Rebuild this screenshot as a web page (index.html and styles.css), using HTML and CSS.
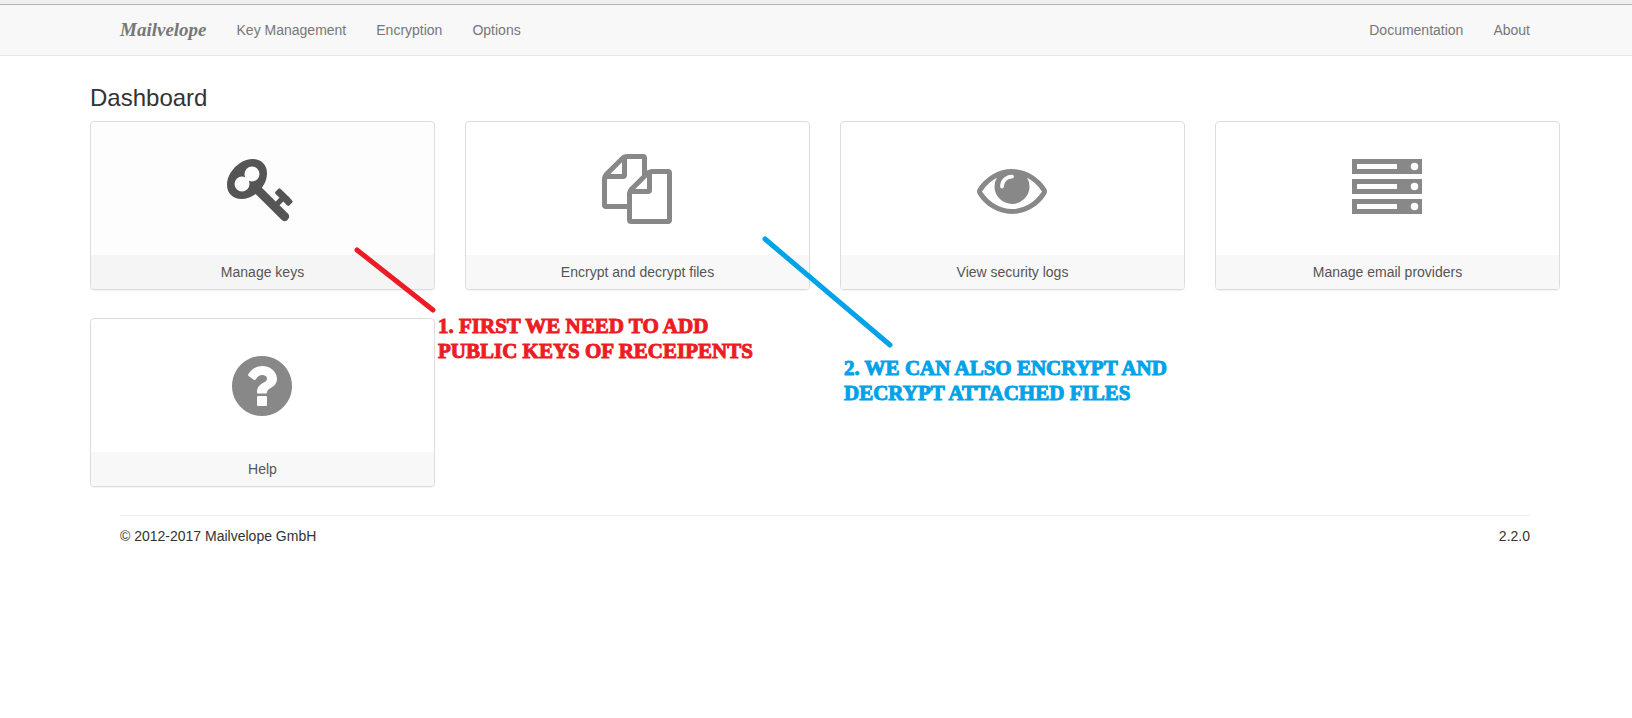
FILE: index.html
```html
<!DOCTYPE html>
<html lang="en">
<head>
<meta charset="utf-8">
<title>Mailvelope</title>
<link rel="stylesheet" href="styles.css">
</head>
<body>
<div class="window-edge"></div>
<nav class="navbar">
  <div class="nav-group">
    <a class="brand" href="#">Mailvelope</a>
    <a class="nav-link" href="#">Key Management</a>
    <a class="nav-link" href="#">Encryption</a>
    <a class="nav-link" href="#">Options</a>
  </div>
  <div class="nav-group">
    <a class="nav-link" href="#">Documentation</a>
    <a class="nav-link" href="#">About</a>
  </div>
</nav>
<main class="dashboard">
  <h1 class="title">Dashboard</h1>
  <div class="cards">
    <div class="cell">
      <a class="card card-active" href="#">
        <span class="card-body"><svg class="icon" viewBox="0 0 1792 1792" aria-hidden="true"><path d="M832 512q0-80-56-136t-136-56-136 56-56 136q0 42 19 83-41-19-83-19-80 0-136 56t-56 136 56 136 136 56 136-56 56-136q0-42-19-83 41 19 83 19 80 0 136-56t56-136zm851 704q0 17-49 66t-66 49q-9 0-28.5-16t-36.5-33-38.5-40-24.5-26l-96 96 220 220q28 28 28 68 0 42-39 81t-81 39q-40 0-68-28l-671-671q-176 131-365 131-163 0-265.5-102.5t-102.5-265.5q0-160 95-313t248-248 313-95q163 0 265.5 102.5t102.5 265.5q0 189-131 365l355 355 96-96q-3-3-26-24.5t-40-38.5-33-36.5-16-28.5q0-17 49-66t66-49q13 0 23 10 6 6 46 44.5t82 79.5 86.5 86 73 78 28.5 41z"/></svg></span>
        <span class="card-label">Manage keys</span>
      </a>
      <svg class="pointer pointer-keys" width="85" height="70" aria-hidden="true"><path d="M4 4L80 64"/></svg>
      <p class="note note-keys">1. FIRST WE NEED TO ADD<br>PUBLIC KEYS OF RECEIPENTS</p>
    </div>
    <div class="cell">
      <a class="card" href="#">
        <span class="card-body"><svg class="icon" viewBox="0 0 1792 1792" aria-hidden="true"><path d="M1696 384q40 0 68 28t28 68v1216q0 40-28 68t-68 28h-960q-40 0-68-28t-28-68v-288h-544q-40 0-68-28t-28-68v-672q0-40 20-88t48-76l408-408q28-28 76-48t88-20h416q40 0 68 28t28 68v328q68-40 128-40h416zm-544 213l-299 299h299v-299zm-640-384l-299 299h299v-299zm196 647l316-316v-416h-384v416q0 40-28 68t-68 28h-416v640h512v-256q0-40 20-88t48-76zm956 804v-1152h-384v416q0 40-28 68t-68 28h-416v640h896z"/></svg></span>
        <span class="card-label">Encrypt and decrypt files</span>
      </a>
      <svg class="pointer pointer-files" width="134" height="115" aria-hidden="true"><path d="M4 4L129 110"/></svg>
      <p class="note note-files">2. WE CAN ALSO ENCRYPT AND<br>DECRYPT ATTACHED FILES</p>
    </div>
    <div class="cell">
      <a class="card" href="#">
        <span class="card-body"><svg class="icon" viewBox="0 0 1792 1792" aria-hidden="true"><path d="M1664 960q-152-236-381-353 61 104 61 225 0 185-131.5 316.5t-316.5 131.5-316.5-131.5-131.5-316.5q0-121 61-225-229 117-381 353 133 205 333.5 326.5t434.5 121.5 434.5-121.5 333.5-326.5zm-720-384q0-20-14-34t-34-14q-125 0-214.5 89.5t-89.5 214.5q0 20 14 34t34 14 34-14 14-34q0-86 61-147t147-61q20 0 34-14t14-34zm848 384q0 34-20 69-140 230-376.5 368.5t-499.5 138.5-499.5-139-376.5-368q-20-35-20-69t20-69q140-229 376.5-368t499.5-139 499.5 139 376.5 368q20 35 20 69z"/></svg></span>
        <span class="card-label">View security logs</span>
      </a>
    </div>
    <div class="cell">
      <a class="card" href="#">
        <span class="card-body"><svg class="icon" viewBox="0 0 1792 1792" aria-hidden="true"><path fill-rule="evenodd" d="M0 128h1792v384h-1792zM128 256v128h1024v-128zM1504 320a96 96 0 1 0 192 0a96 96 0 1 0-192 0zM0 640h1792v384h-1792zM128 768v128h1024v-128zM1504 832a96 96 0 1 0 192 0a96 96 0 1 0-192 0zM0 1152h1792v384h-1792zM128 1280v128h1024v-128zM1504 1344a96 96 0 1 0 192 0a96 96 0 1 0-192 0z"/></svg></span>
        <span class="card-label">Manage email providers</span>
      </a>
    </div>
    <div class="cell">
      <a class="card" href="#">
        <span class="card-body"><svg class="icon" viewBox="0 0 1792 1792" aria-hidden="true"><path d="M1024 1376v-192q0-14-9-23t-23-9h-192q-14 0-23 9t-9 23v192q0 14 9 23t23 9h192q14 0 23-9t9-23zm256-672q0-88-55.5-163t-138.5-116-170-41q-243 0-371 213-15 24 8 42l132 100q7 6 19 6 16 0 25-12 53-68 86-92 34-24 86-24 48 0 85.5 26t37.5 59q0 38-20 61t-68 45q-63 28-115.5 86.5t-52.5 125.5v36q0 14 9 23t23 9h192q14 0 23-9t9-23q0-19 21.5-49.5t54.5-49.5q32-18 49-28.5t46-35 44.5-48 28-60.5 12.5-81zm384 192q0 209-103 385.5t-279.5 279.5-385.5 103-385.5-103-279.5-279.5-103-385.5 103-385.5 279.5-279.5 385.5-103 385.5 103 279.5 279.5 103 385.5z"/></svg></span>
        <span class="card-label">Help</span>
      </a>
    </div>
  </div>
</main>
<footer class="footer">
  <span>© 2012-2017 Mailvelope GmbH</span>
  <span>2.2.0</span>
</footer>
</body>
</html>
```
FILE: styles.css
```css
* {
  box-sizing: border-box;
}

body {
  margin: 0;
  background: #fff;
  color: #333;
  font: 14px/20px "Liberation Sans", Arial, sans-serif;
}

a {
  text-decoration: none;
}

.window-edge {
  height: 5px;
  background: #f0f0f0;
  border-bottom: 1px solid #b4b4b4;
}

.navbar {
  display: flex;
  justify-content: space-between;
  padding: 0 87px 0 105px;
  background: #f8f8f8;
  border-bottom: 1px solid #e7e7e7;
}

.nav-group {
  display: flex;
}

.brand,
.nav-link {
  padding: 15px;
  color: #777;
}

.brand {
  font: italic bold 19px/20px "Liberation Serif", serif;
}

.dashboard {
  padding: 29px 72px 0 90px;
}

.title {
  margin: 0 0 10px;
  font-size: 24px;
  font-weight: 400;
  line-height: 26px;
}

.cards {
  display: grid;
  grid-template-columns: repeat(4, 1fr);
  gap: 28px 30px;
}

.cell {
  position: relative;
}

.card {
  display: block;
  overflow: hidden;
  border: 1px solid #ddd;
  border-radius: 4px;
  box-shadow: 0 1px 1px rgba(0, 0, 0, 0.05);
  color: #555;
  text-align: center;
}

.card-body {
  display: flex;
  justify-content: center;
  padding: 32px 1px 31px 0;
}

.icon {
  width: 70px;
  height: 70px;
  fill: #888;
}

.card-label {
  display: block;
  padding: 7px;
  background: #f8f8f8;
}

.card-active {
  background: #fdfdfd;
}

.card-active .icon {
  fill: #555;
}

.card-active .card-label {
  background: #f5f5f5;
}

.pointer {
  position: absolute;
  z-index: 1;
  fill: none;
  stroke-width: 5px;
  stroke-linecap: round;
}

.pointer-keys {
  left: 263px;
  top: 125px;
  stroke: #ed1c24;
}

.pointer-files {
  left: 296px;
  top: 114px;
  stroke: #00a2e8;
}

.note {
  position: absolute;
  z-index: 1;
  margin: 0;
  font: bold 21px/25px "Liberation Serif", serif;
  white-space: nowrap;
  -webkit-text-stroke: 1px currentColor;
}

.note-keys {
  left: 348px;
  top: 193px;
  color: #ed1c24;
}

.note-files {
  left: 379px;
  top: 235px;
  color: #00a2e8;
}

.footer {
  display: flex;
  justify-content: space-between;
  margin: 28px 102px 0 120px;
  padding-top: 10px;
  border-top: 1px solid #eee;
}
```
